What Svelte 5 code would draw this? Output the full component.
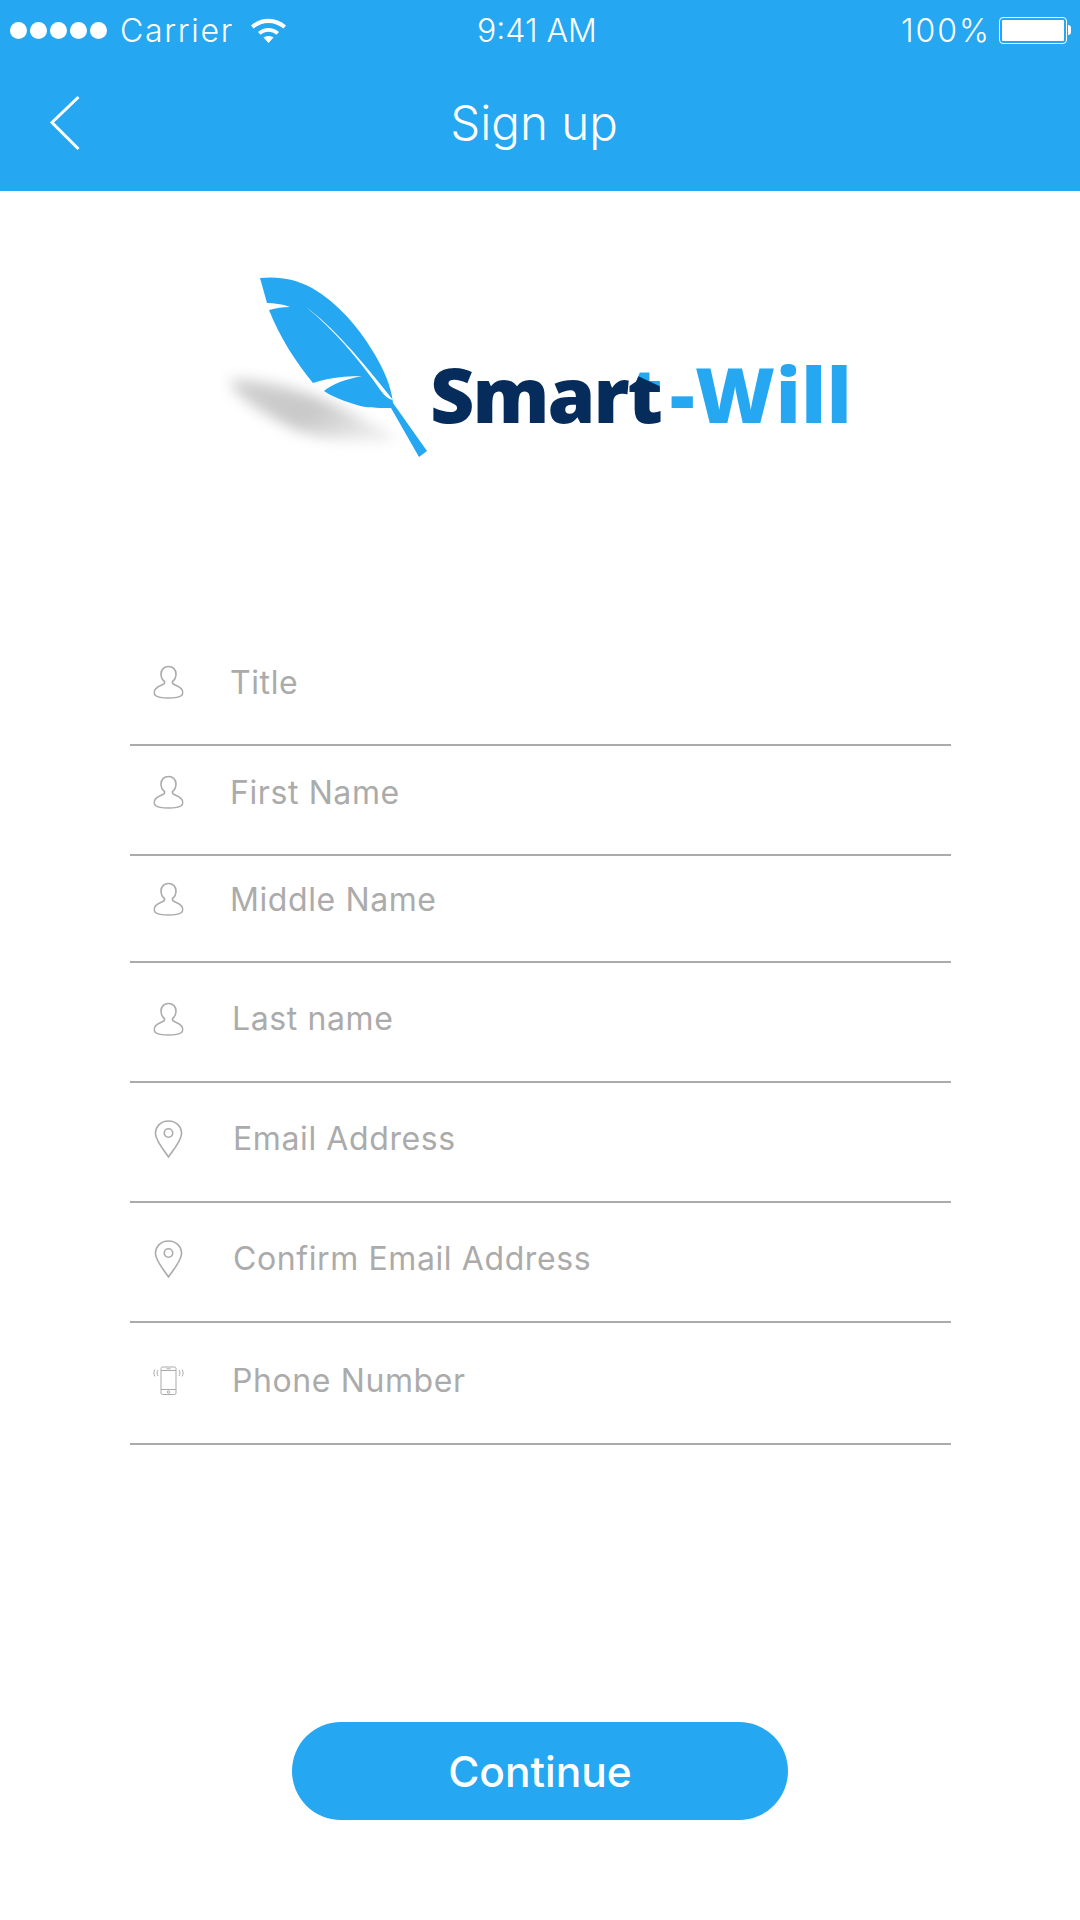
<script>
	const rows = [
		{ label: 'Title', icon: 'person', height: 110, lift: 16, textLeft: 46 },
		{ label: 'First Name', icon: 'person', height: 110, lift: 16, textLeft: 46 },
		{ label: 'Middle Name', icon: 'person', height: 107, lift: 19, textLeft: 46 },
		{ label: 'Last name', icon: 'person', height: 120, lift: 7, textLeft: 48 },
		{ label: 'Email Address', icon: 'pin', height: 120, lift: 7, textLeft: 49 },
		{ label: 'Confirm Email Address', icon: 'pin', height: 120, lift: 7, textLeft: 49 },
		{ label: 'Phone Number', icon: 'phone', height: 122, lift: 5, textLeft: 48 }
	];
</script>

<div class="page">
	<header class="header">
		<div class="status">
			<div class="status-left">
				<span class="dots"><i></i><i></i><i></i><i></i><i></i></span>
				<span class="carrier">Carrier</span>
				<svg class="wifi" width="37" height="26" viewBox="0 0 37 26">
					<path d="M1 8.500C11 -0.500 26 -0.500 36 8.500L33.500 11.500C24.500 4 12.500 4 3.500 11.500Z" fill="#fff" />
					<path d="M8 15C14 9.800 23 9.800 29 15L26.500 17.800C21.500 13.800 15.500 13.800 10.500 17.800Z" fill="#fff" />
					<path d="M13.500 20.500C16.500 18.500 20.500 18.500 23.500 20.500L18.500 26Z" fill="#fff" />
				</svg>
			</div>
			<span class="time">9:41 AM</span>
			<div class="status-right">
				<span class="percent">100%</span>
				<span class="battery"><span class="battery-fill"></span></span>
				<span class="battery-cap"></span>
			</div>
		</div>
		<nav class="nav">
			<svg class="back" width="32" height="56" viewBox="0 0 32 56">
				<path d="M29.500 2L3 27.500L29.500 54" fill="none" stroke="#fff" stroke-width="3" />
			</svg>
			<h1>Sign up</h1>
		</nav>
	</header>

	<div class="logo">
		<svg class="feather" width="220" height="200" viewBox="220 270 220 200">
			<defs>
				<linearGradient id="fade" x1="0" y1="0" x2="1" y2="0.5">
					<stop offset="0" stop-color="#d0d0d0" />
					<stop offset="0.6" stop-color="#c8c8c8" />
					<stop offset="1" stop-color="#e8e8e8" />
				</linearGradient>
				<filter id="soft" x="-30%" y="-60%" width="160%" height="220%">
					<feGaussianBlur stdDeviation="7" />
				</filter>
			</defs>
			<path d="M229 380C270 378 330 395 398 440C350 440 320 442 290 427C265 414 236 398 229 380Z" fill="url(#fade)" filter="url(#soft)" />
			<path
				d="M260 278C278 276 296 279 312 288C338 303 358 327 372 350C384 369 391 386 393 403L427 451L419 457L391 408C376 408 366 408 357 405C344 401 333 397 324 391C332 384 346 379 362 376C350 376 338 377 328 379C322 380 317 382 313 383C296 362 280 338 269 310C276 308 283 307 290 307C282 304 274 303 267 303Z"
				fill="#25a7f2"
			/>
			<path d="M306 307C332 326 360 358 393 400C388 399 385 396 381 391C358 358 334 330 306 307Z" fill="#fff" />
		</svg>
		<div class="wordmark"><span class="dark">Smar</span><span class="dark-t">t</span><span class="blue">-Will</span></div>
	</div>

	<form class="form">
		{#each rows as row}
			<div class="row" style="height: {row.height}px; padding-bottom: {row.lift}px">
				<span class="icon">
					{#if row.icon === 'person'}
						<svg width="31" height="34" viewBox="0 0 31 34" fill="none" stroke="#ababab" stroke-width="1.600">
							<path d="M15.500 1.500C11 1.500 8 4.500 8 9C8 12.500 9.500 15 11.500 16.500V18C11.500 20 5 20.500 2.500 24C1 26 1 29 2.500 30.500C5 32.500 10 33 15.500 33C21 33 26 32.500 28.500 30.500C30 29 30 26 28.500 24C26 20.500 19.500 20 19.500 18V16.500C21.500 15 23 12.500 23 9C23 4.500 20 1.500 15.500 1.500Z" />
						</svg>
					{:else if row.icon === 'pin'}
						<svg width="31" height="38" viewBox="0 0 31 38" fill="none" stroke="#ababab" stroke-width="1.600">
							<path d="M15.500 37C10 29 3 21 2.500 14C2.200 6.500 8 1 15.500 1C23 1 28.800 6.500 28.500 14C28 21 21 29 15.500 37Z" />
							<circle cx="15.500" cy="13" r="4.200" />
						</svg>
					{:else}
						<svg width="31" height="30" viewBox="0 0 31 30" fill="none" stroke="#ababab" stroke-width="1">
							<rect x="8" y="1" width="15" height="27.500" rx="1.500" />
							<path d="M8 4.500H23M8 23.500H23M13.500 2.800H17.500" />
							<circle cx="15.500" cy="26" r="1.200" />
							<path d="M5 4C3.800 6 3.800 8 5 10M2 3.500C0.500 6 0.500 8 2 10.500M26 4C27.200 6 27.200 8 26 10M29 3.500C30.500 6 30.500 8 29 10.500" />
						</svg>
					{/if}
				</span>
				<span class="label" style="margin-left: {row.textLeft}px">{row.label}</span>
			</div>
		{/each}
	</form>

	<div class="actions">
		<button type="button" class="continue">Continue</button>
	</div>
</div>

<style>
	:global(body) {
		background: #fff;
	}

	.page {
		width: 1080px;
		height: 1920px;
		background: #fff;
		overflow: hidden;
		font-family: Inter, "Open Sans", sans-serif;
	}

	.header {
		height: 191px;
		background: #25a7f2;
		color: #fff;
		box-sizing: border-box;
		padding-top: 13px;
	}

	.status {
		display: flex;
		align-items: center;
		justify-content: space-between;
		height: 34px;
		padding: 0 9px 0 10px;
		font-family: Inter, sans-serif;
		font-weight: 300;
		font-size: 32px;
	}

	.status-left,
	.status-right {
		display: flex;
		align-items: center;
		width: 300px;
	}

	.status-right {
		justify-content: flex-end;
	}

	.dots {
		display: flex;
		gap: 3px;
	}

	.dots i {
		width: 17px;
		height: 17px;
		border-radius: 50%;
		background: #fff;
	}

	.carrier {
		margin-left: 13px;
		letter-spacing: 1.700px;
	}

	.wifi {
		margin-left: 16px;
	}

	.time {
		margin-left: -7px;
	}

	.percent {
		letter-spacing: 2px;
	}

	.battery {
		box-sizing: border-box;
		width: 68px;
		height: 27px;
		margin-left: 8px;
		padding: 2px;
		border: 1.500px solid #fff;
		border-radius: 4px;
		display: flex;
	}

	.battery-fill {
		flex: 1;
		background: #fff;
		border-radius: 1px;
	}

	.battery-cap {
		width: 3px;
		height: 10px;
		margin-left: 1px;
		background: #fff;
		border-radius: 0 3px 3px 0;
	}

	.nav {
		position: relative;
		display: flex;
		justify-content: center;
		align-items: center;
		height: 76px;
		margin-top: 38px;
		padding-right: 12px;
	}

	.back {
		position: absolute;
		left: 49px;
		top: 10px;
	}

	h1 {
		margin: 0;
		font-family: Inter, sans-serif;
		font-weight: 300;
		font-size: 47.500px;
		line-height: 1;
	}

	.logo {
		display: flex;
		align-items: flex-start;
		height: 445px;
		padding: 79px 0 0 220px;
		box-sizing: border-box;
	}

	.wordmark {
		margin: 85px 0 0 -10px;
		font-family: "Open Sans", sans-serif;
		font-weight: 800;
		font-size: 77px;
		line-height: 1;
		white-space: nowrap;
	}

	.dark {
		color: #052c5a;
		letter-spacing: -2px;
	}

	.dark-t {
		background: linear-gradient(205deg, #25a7f2 38%, #052c5a 39%);
		-webkit-background-clip: text;
		background-clip: text;
		color: transparent;
	}

	.blue {
		margin-left: 7px;
		color: #25a7f2;
		letter-spacing: 0.600px;
	}

	.form {
		margin: 0 129px 0 130px;
	}

	.row {
		display: flex;
		align-items: center;
		box-sizing: border-box;
		padding-left: 23px;
		border-bottom: 2px solid #ababab;
	}

	.icon {
		display: flex;
		width: 31px;
		justify-content: center;
	}

	.label {
		font-size: 32px;
		letter-spacing: 0.600px;
		color: #ababab;
	}

	.actions {
		display: flex;
		justify-content: center;
		margin-top: 277px;
	}

	.continue {
		width: 496px;
		height: 98px;
		border: none;
		border-radius: 49px;
		background: #25a7f2;
		color: #fff;
		font-family: Inter, sans-serif;
		font-weight: 500;
		font-size: 42.500px;
	}
</style>
